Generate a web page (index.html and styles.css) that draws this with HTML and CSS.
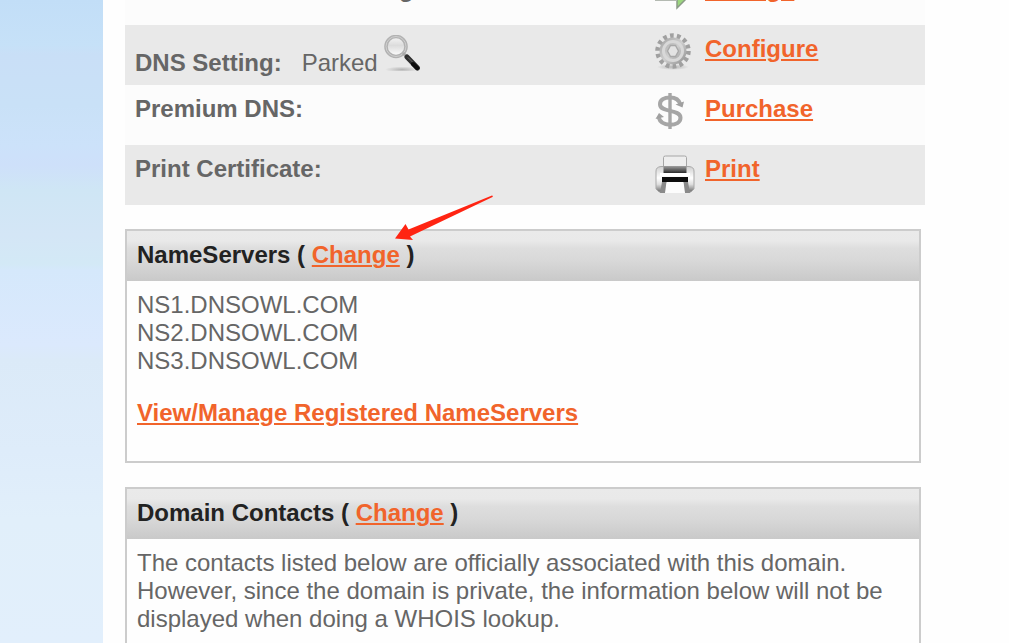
FILE: index.html
```html
<!DOCTYPE html>
<html lang="en">
<head>
    <meta charset="UTF-8">
    <meta name="viewport" content="width=device-width, initial-scale=1.0">
    <title>Domain Details</title>
    <link rel="stylesheet" href="styles.css">
</head>
<body>
    <main class="content">
        <table class="settings">
            <tbody>
                <tr>
                    <th scope="row">Sub-Domain Forwarding:</th>
                    <td class="icon-cell">
                        <svg class="icon" viewBox="0 0 40 40" aria-hidden="true">
                            <path d="M2 14h20V3l16 16-16 16v-8H2z" fill="#9bd77e" stroke="#8a9a86" stroke-width="1.5"/>
                            <path d="M0 27h22" stroke="#b4bab2" stroke-width="2"/>
                        </svg>
                    </td>
                    <td><a href="#">Manage</a></td>
                </tr>
                <tr>
                    <th scope="row">DNS Setting:<span class="value">Parked</span>
                        <svg class="search-icon" viewBox="0 0 36 36" aria-hidden="true">
                            <defs>
                                <filter id="soft">
                                    <feGaussianBlur stdDeviation="0.6"/>
                                </filter>
                                <linearGradient id="glass" x1="0" y1="0" x2="0" y2="1">
                                    <stop offset="0" stop-color="#f6f6f6"/>
                                    <stop offset="0.45" stop-color="#dcdcdc"/>
                                    <stop offset="1" stop-color="#ffffff"/>
                                </linearGradient>
                                <radialGradient id="shade">
                                    <stop offset="0" stop-color="#b4b4b4"/>
                                    <stop offset="1" stop-color="#b4b4b4" stop-opacity="0"/>
                                </radialGradient>
                            </defs>
                            <ellipse cx="18" cy="34.5" rx="17" ry="3" fill="url(#shade)"/>
                            <g filter="url(#soft)">
                                <circle cx="12" cy="11.5" r="10" fill="url(#glass)" stroke="#b2b2b2" stroke-width="3.6"/>
                                <circle cx="12" cy="11.5" r="10" fill="none" stroke="#cfcfcf" stroke-width="1"/>
                                <path d="M19 18l4 4" stroke="#a8a8a8" stroke-width="3"/>
                                <path d="M23 22l10.500 11" stroke="#2e2e2e" stroke-width="5" stroke-linecap="round"/>
                                <path d="M24 22.500l6 6" stroke="#6a6a6a" stroke-width="1"/>
                                <path d="M29 29l4 4" stroke="#0c0c0c" stroke-width="4" stroke-linecap="round"/>
                            </g>
                        </svg>
                    </th>
                    <td class="icon-cell">
                        <svg class="icon" viewBox="0 0 40 40" aria-hidden="true">
                            <defs>
                                <linearGradient id="metal" x1="0" y1="0" x2="1" y2="1">
                                    <stop offset="0" stop-color="#b0b0b0"/>
                                    <stop offset="0.5" stop-color="#cecece"/>
                                    <stop offset="1" stop-color="#a2a2a2"/>
                                </linearGradient>
                            </defs>
                            <ellipse cx="18" cy="34" rx="16" ry="3" fill="url(#shade)"/>
                            <g filter="url(#soft)">
                                <circle cx="18" cy="18" r="15" fill="none" stroke="#a0a0a0" stroke-width="5.500" stroke-dasharray="3.600 3.132"/>
                                <circle cx="18" cy="18" r="9" fill="none" stroke="url(#metal)" stroke-width="9"/>
                                <circle cx="18" cy="18" r="9.500" fill="none" stroke="#d8d8d8" stroke-width="3"/>
                                <path d="M15.500 12.500h5l3 5.500-3 5.500h-5l-3-5.500z" fill="#e3e3e3" stroke="#a8a8a8" stroke-width="1.400"/>
                            </g>
                        </svg>
                    </td>
                    <td><a href="#">Configure</a></td>
                </tr>
                <tr>
                    <th scope="row">Premium DNS:</th>
                    <td class="icon-cell">
                        <svg class="icon" viewBox="0 0 40 40" aria-hidden="true">
                            <g filter="url(#soft)">
                                <path d="M15 0v36" stroke="#a6a6a6" stroke-width="3.400"/>
                                <path d="M25.500 11.500C24 6.500 20 4.500 15 4.500 9 4.500 5 7 5 11.200c0 9 20.500 4.300 20.500 13.500 0 4.600-4.700 7-10.500 7C9.500 31.700 5 29.500 3.500 24" fill="none" stroke="#a6a6a6" stroke-width="4"/>
                                <path d="M20.500 11.500l8.500-3-1.500 6zM.5 26L4 20l5 4z" fill="#a0a0a0"/>
                            </g>
                        </svg>
                    </td>
                    <td><a href="#">Purchase</a></td>
                </tr>
                <tr>
                    <th scope="row">Print Certificate:</th>
                    <td class="icon-cell">
                        <svg class="icon" viewBox="0 0 40 40" aria-hidden="true">
                            <defs>
                                <linearGradient id="casing" x1="0" y1="0" x2="0" y2="1">
                                    <stop offset="0" stop-color="#cfcfcf"/>
                                    <stop offset="0.45" stop-color="#ffffff"/>
                                    <stop offset="0.7" stop-color="#dedede"/>
                                    <stop offset="1" stop-color="#6c6c6c"/>
                                </linearGradient>
                                <linearGradient id="slot" x1="0" y1="0" x2="0" y2="1">
                                    <stop offset="0" stop-color="#a0a0a0"/>
                                    <stop offset="1" stop-color="#2a2a2a"/>
                                </linearGradient>
                            </defs>
                            <g filter="url(#soft)">
                                <path d="M1 36V18q0-4 5-4.500h28q5 .5 5 4.500v18l-3 3H4z" fill="url(#casing)" stroke="#a9a9a9"/>
                                <path d="M8.500 14V4.500q0-1.500 2-1.500h19q2 0 2 1.500V14z" fill="#eeeeee" stroke="#a6a6a6"/>
                                <path d="M8.500 13h23v7h-23z" fill="url(#slot)"/>
                                <path d="M5 20h30v3H5z" fill="#ffffff"/>
                                <path d="M7 24h26v6H7z" fill="#0a0a0a"/>
                                <path d="M7 29h5l-2 11H5zM28 29h5l2 11h-5z" fill="#8a8a8a"/>
                                <path d="M11.500 29h17l1.500 11H10z" fill="#fcfcfc"/>
                            </g>
                        </svg>
                    </td>
                    <td><a href="#">Print</a></td>
                </tr>
            </tbody>
        </table>

        <section class="panel">
            <h2 class="panel-title">NameServers ( <a href="#">Change</a> )
                <svg class="arrow" viewBox="0 0 100 46" aria-hidden="true">
                    <path d="M0 43.500L10.500 29l3 5.500L97 .5q1.500 0 .5 1.500L15 41.500l3 3.500z" fill="#ff2412"/>
                </svg>
            </h2>
            <div class="panel-body">
                <ul class="nameservers">
                    <li>NS1.DNSOWL.COM</li>
                    <li>NS2.DNSOWL.COM</li>
                    <li>NS3.DNSOWL.COM</li>
                </ul>
                <p class="manage"><a href="#">View/Manage Registered NameServers</a></p>
            </div>
        </section>

        <section class="panel">
            <h2 class="panel-title">Domain Contacts ( <a href="#">Change</a> )</h2>
            <div class="panel-body">
                <p>The contacts listed below are officially associated with this domain. However, since the domain is private, the information below will not be displayed when doing a WHOIS lookup.</p>
            </div>
        </section>
    </main>
</body>
</html>
```

FILE: styles.css
```css
* {
    margin: 0;
    padding: 0;
    box-sizing: border-box;
}

body {
    height: 100vh;
    overflow: hidden;
    padding-left: 103px;
    font-family: "Liberation Sans", Arial, sans-serif;
    font-size: 24px;
    line-height: 28px;
    color: #666;
    background: linear-gradient(
        #c2def7 0,
        #c6e1f8 45px,
        #c9dff7 55px,
        #c9e1f7 105px,
        #cce2fa 145px,
        #cee0fa 165px,
        #cfe6f5 190px,
        #d4e6f6 235px,
        #d3e9f6 264px,
        #d5e8fb 270px,
        #dbe9fd 345px,
        #dbeaf8 360px,
        #deecfa 450px,
        #e1effa 520px,
        #e2effc 643px
    );
}

a {
    color: #f1642b;
    font-weight: bold;
    text-decoration: underline;
    text-decoration-thickness: 2px;
    text-underline-offset: 2px;
}

a:hover {
    text-decoration: none;
}

.content {
    min-height: 100vh;
    padding: 0 84px 0 22px;
    background-color: #fefefe;
}

/* Settings table, scrolled part way past its first row */
.settings {
    width: 100%;
    margin-top: -35px;
    border-collapse: collapse;
    table-layout: fixed;
}

.settings tr {
    height: 60px;
    background-color: #fcfcfc;
}

.settings tr:nth-child(even) {
    background-color: #e9e9e9;
}

.settings th,
.settings td {
    padding: 10px 0 0;
    text-align: left;
    vertical-align: top;
}

.settings th {
    padding-left: 10px;
}

.settings td {
    width: 220px;
}

.settings .icon-cell {
    width: 50px;
    padding-top: 8px;
}

.value {
    margin-left: 20px;
    font-weight: normal;
}

.icon {
    display: block;
    width: 40px;
    height: 40px;
}

.search-icon {
    width: 36px;
    height: 36px;
    vertical-align: baseline;
}

.panel {
    margin: 24px 4px 24px 0;
    border: 2px solid #ccc;
}

.panel-title {
    position: relative;
    padding: 10px 10px 12px;
    font-size: 24px;
    line-height: 28px;
    color: #222;
    background: linear-gradient(#eaeaea 0, #e9e9e9 20%, #dedede 34%, #d8d8d8 60%, #c9c9c9 100%);
}

.panel-body {
    padding: 10px;
}

.nameservers {
    list-style: none;
}

.manage {
    margin: 24px 0;
}

/* Pointer drawn over the Change link */
.arrow {
    position: absolute;
    left: 268px;
    top: -36px;
    width: 100px;
    height: 46px;
}
```
